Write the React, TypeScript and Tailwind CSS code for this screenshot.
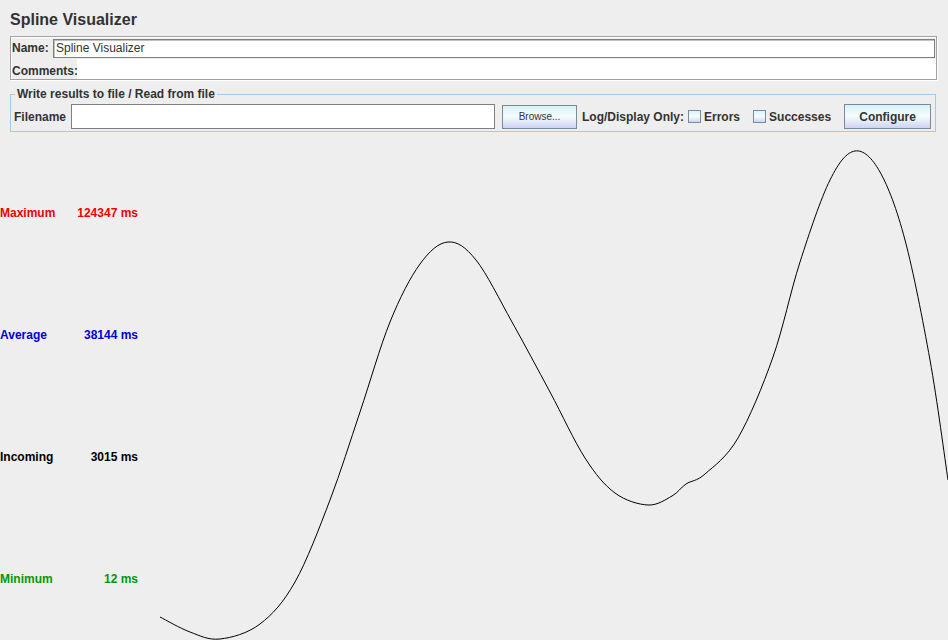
import React from "react";

const PTS: [number, number][] = [
  [160, 617], [190, 632], [220, 639], [260, 624], [295, 582], [330, 500], [360, 412],
  [390, 322], [420, 264], [448, 242], [476, 260], [512, 322], [550, 392], [585, 458],
  [615, 493], [648, 505], [672, 496], [686, 484], [705, 474], [738, 438], [773, 357],
  [800, 262], [830, 180], [855, 151], [880, 172], [905, 240], [930, 360], [948, 480],
];

function splinePath(pts: [number, number][], ox: number, oy: number) {
  const p = pts.map(([x, y]) => [x - ox, y - oy]);
  let d = `M${p[0][0]},${p[0][1]}`;
  for (let i = 0; i < p.length - 1; i++) {
    const p0 = p[i - 1] || p[i];
    const p1 = p[i];
    const p2 = p[i + 1];
    const p3 = p[i + 2] || p2;
    const c1x = p1[0] + (p2[0] - p0[0]) / 6;
    const c1y = p1[1] + (p2[1] - p0[1]) / 6;
    const c2x = p2[0] - (p3[0] - p1[0]) / 6;
    const c2y = p2[1] - (p3[1] - p1[1]) / 6;
    d += ` C${c1x.toFixed(1)},${c1y.toFixed(1)} ${c2x.toFixed(1)},${c2y.toFixed(1)} ${p2[0]},${p2[1]}`;
  }
  return d;
}

const btn =
  "border border-[#7a8a99] bg-[linear-gradient(to_bottom,#d6f2f6_0%,#f4fcfd_45%,#eef4fb_60%,#cdd3f2_100%)]";

function Check({ label }: { label: string }) {
  return (
    <div className="flex items-center shrink-0 whitespace-nowrap">
      <span className={`w-[13px] h-[13px] shrink-0 ${btn}`} />
      <span className="ml-[3px] text-[12px] font-bold text-[#333]">{label}</span>
    </div>
  );
}

export default function App() {
  return (
    <div
      className="w-[948px] h-[640px] bg-[#eeeeee] overflow-hidden flex flex-col"
      style={{ fontFamily: '"Liberation Sans", Arial, sans-serif' }}
    >
      <div className="h-[36px] flex items-center pt-[4px] pl-[10px] text-[16px] font-bold text-[#333] shrink-0">
        Spline Visualizer
      </div>
      <div className="ml-[10px] w-[927px] h-[44px] border border-[#a0a0a0] shadow-[inset_1px_1px_0_#fff,1px_1px_0_#fff] flex flex-col shrink-0">
        <div className="flex items-center h-[21px] pl-[1px] pr-[1px] pt-[1px]">
          <span className="text-[12px] font-bold text-[#333] w-[41px] shrink-0">Name:</span>
          <div className="flex-1 h-[19px] bg-white border border-[#7f7f7f] shadow-[inset_1px_1px_0_#c0c0c0] flex items-center pl-[2px] text-[12px] text-[#333]">
            Spline Visualizer
          </div>
        </div>
        <div className="flex items-end h-[21px] pl-[1px] pt-[1px]">
          <span className="text-[12px] font-bold text-[#333] w-[65px] shrink-0 leading-[14px] pb-[1px]">Comments:</span>
          <div className="flex-1 h-[20px] bg-white" />
        </div>
      </div>
      <fieldset className="ml-[10px] mt-[7px] w-[926px] border border-[#a8c8e8] pl-[3px] pr-[2px] pb-[1px] shrink-0">
        <legend className="ml-[1px] px-[2px] text-[12px] font-bold text-[#333] leading-[14px]">
          Write results to file / Read from file
        </legend>
        <div className="flex items-center h-[27px] mt-[2px] whitespace-nowrap">
          <span className="text-[12px] font-bold text-[#333] w-[57px] shrink-0">Filename</span>
          <div className="w-[424px] h-[25px] shrink-0 bg-white border border-[#7f7f7f]" />
          <button className={`ml-[7px] w-[75px] h-[24px] shrink-0 ${btn} text-[10px] text-[#333]`}>Browse...</button>
          <span className="ml-[5px] shrink-0 text-[12px] font-bold text-[#333]">Log/Display Only:</span>
          <div className="ml-[4px]">
            <Check label="Errors" />
          </div>
          <div className="ml-[13px]">
            <Check label="Successes" />
          </div>
          <button className={`ml-[13px] w-[87px] h-[25px] shrink-0 ${btn} text-[12px] font-bold text-[#333]`}>Configure</button>
        </div>
      </fieldset>
      <div className="flex flex-1 min-h-0 mt-[8px]">
        <div className="w-[160px] shrink-0 flex flex-col pt-[65px] gap-[106px] text-[12px] font-bold leading-[16px]">
          <div className="w-[138px] flex justify-between text-[#f00000]">
            <span>Maximum</span>
            <span>124347 ms</span>
          </div>
          <div className="w-[138px] flex justify-between text-[#0000d8]">
            <span>Average</span>
            <span>38144 ms</span>
          </div>
          <div className="w-[138px] flex justify-between text-black">
            <span>Incoming</span>
            <span>3015 ms</span>
          </div>
          <div className="w-[138px] flex justify-between text-[#009a00]">
            <span>Minimum</span>
            <span>12 ms</span>
          </div>
        </div>
        <svg width="788" height="500" className="shrink-0 overflow-visible">
          <path d={splinePath(PTS, 160, 140)} fill="none" stroke="#000" strokeWidth="1" />
        </svg>
      </div>
    </div>
  );
}
